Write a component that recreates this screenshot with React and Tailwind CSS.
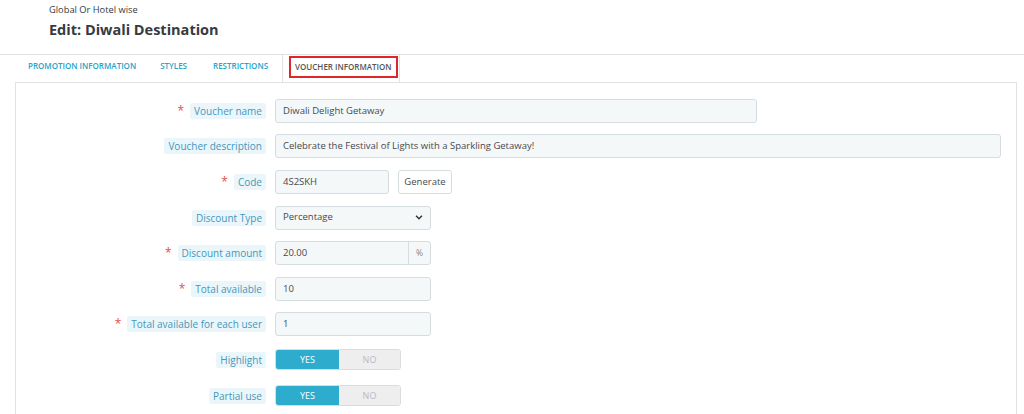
import React from "react";

const Label = ({ req, children }) => (
  <div className="w-[250px] flex justify-end items-center gap-[6px] shrink-0">
    {req && <span className="text-[#e4504b] text-[12px] leading-none">*</span>}
    <span className="bg-[#ebf6fa] text-[#4596bb] text-[10px] leading-[16px] px-[4px] rounded-[2px]">{children}</span>
  </div>
);

const Row = ({ children, label, req }) => (
  <div className="flex items-center gap-[9px] h-[35.6px]">
    <Label req={req}>{label}</Label>
    {children}
  </div>
);

const Input = ({ w, value }) => (
  <div className={`${w} h-[24px] bg-[#f5f8f9] border border-[#d6dde0] rounded-[3px] flex items-center px-[7px] text-[9.5px] text-[#45494f]`}>
    {value}
  </div>
);

const Toggle = () => (
  <div className="flex w-[126px] h-[21px] rounded-[3px] overflow-hidden border border-[#dcdcdc]">
    <div className="w-[63px] bg-[#2eacce] text-white text-[9px] flex items-center justify-center">YES</div>
    <div className="flex-1 bg-[#eeeeee] text-[#bbbbbb] text-[9px] flex items-center justify-center">NO</div>
  </div>
);

export default function App() {
  return (
    <div className="w-[1024px] h-[414px] bg-white overflow-hidden" style={{ fontFamily: '"Open Sans", sans-serif' }}>
      <div className="pl-[49px] pt-[3px] h-[54px]">
        <div className="text-[9.3px] text-[#363a41] leading-[14px]">Global Or Hotel wise</div>
        <div className="text-[14.5px] font-bold text-[#363a41] leading-[22px] mt-[2px]">Edit: Diwali Destination</div>
      </div>
      <div className="border-t border-[#e2e2e2] h-[28px] flex items-stretch pl-[28px] text-[8px] font-semibold">
        <div className="flex items-center pb-[5px] text-[#25a5c9] mr-[24px]">PROMOTION INFORMATION</div>
        <div className="flex items-center pb-[5px] text-[#25a5c9] mr-[26px]">STYLES</div>
        <div className="flex items-center pb-[5px] text-[#25a5c9] mr-[14px]">RESTRICTIONS</div>
        <div className="flex items-start pt-[1px] border-l border-r border-[#e2e2e2] bg-white pl-[6px] pr-[1px]">
          <div className="border-2 border-[#e0262a] h-[22px] flex items-center px-[4px] text-[#555]">VOUCHER INFORMATION</div>
        </div>
      </div>
      <div className="ml-[15px] w-[1002px] border border-[#e2e2e2] pt-[10px] h-[400px]">
        <Row label="Voucher name" req><Input w="w-[482px]" value="Diwali Delight Getaway" /></Row>
        <Row label="Voucher description"><Input w="w-[726px]" value="Celebrate the Festival of Lights with a Sparkling Getaway!" /></Row>
        <Row label="Code" req>
          <Input w="w-[114px]" value="4S2SKH" />
          <div className="h-[24px] w-[54px] border border-[#d6dde0] rounded-[3px] bg-white flex items-center justify-center text-[9.5px] text-[#45494f]">Generate</div>
        </Row>
        <Row label="Discount Type">
          <div className="w-[156px] h-[24px] bg-[#f5f8f9] border border-[#d6dde0] rounded-[3px] flex items-center justify-between px-[7px] text-[9.5px] text-[#45494f]">
            <span>Percentage</span>
            <svg width="8" height="5" viewBox="0 0 9 6"><path d="M1 1l3.5 3.5L8 1" fill="none" stroke="#333" strokeWidth="1.8" /></svg>
          </div>
        </Row>
        <Row label="Discount amount" req>
          <div className="w-[156px] h-[24px] bg-[#f5f8f9] border border-[#d6dde0] rounded-[3px] flex text-[9.5px] text-[#45494f]">
            <div className="flex-1 flex items-center px-[7px]">20.00</div>
            <div className="w-[22px] border-l border-[#d6dde0] flex items-center justify-center text-[8.5px] text-[#888]">%</div>
          </div>
        </Row>
        <Row label="Total available" req><Input w="w-[156px]" value="10" /></Row>
        <Row label="Total available for each user" req><Input w="w-[156px]" value="1" /></Row>
        <Row label="Highlight"><Toggle /></Row>
        <Row label="Partial use"><Toggle /></Row>
      </div>
    </div>
  );
}
